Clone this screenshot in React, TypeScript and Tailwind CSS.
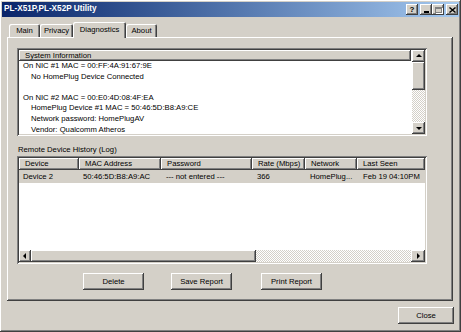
import React from "react";

/* -------------------- 3D borders -------------------- */

const raised =
  "shadow-[inset_-1px_-1px_#404040,inset_1px_1px_#ffffff,inset_-2px_-2px_#808080,inset_2px_2px_#d4d0c8]";
const sunken =
  "shadow-[inset_1px_1px_#808080,inset_-1px_-1px_#ffffff,inset_2px_2px_#404040,inset_-2px_-2px_#d4d0c8]";
const headerCell =
  "shadow-[inset_-1px_-1px_#404040,inset_1px_1px_#ffffff,inset_-2px_-2px_#808080]";
const checker =
  "bg-[repeating-conic-gradient(#ffffff_0_25%,#d4d0c8_0_50%)] bg-[length:2px_2px]";

type Dir = "up" | "down" | "left" | "right";

const arrowPoints: Record<Dir, string> = {
  up: "0,4 3,1 6,4",
  down: "0,2 3,5 6,2",
  left: "4,0 1,3 4,6",
  right: "2,0 5,3 2,6",
};

const ArrowBtn = ({ dir, w = 13, h = 12 }: { dir: Dir; w?: number; h?: number }) => (
  <div
    className={`shrink-0 bg-[#d4d0c8] ${raised} flex items-center justify-center`}
    style={{ width: w, height: h }}
  >
    <svg width="6" height="6" viewBox="0 0 6 6">
      <polygon points={arrowPoints[dir]} fill="#000" />
    </svg>
  </div>
);

const Button = ({ label, className = "" }: { label: string; className?: string }) => (
  <div
    className={`h-[17px] w-[61px] shrink-0 bg-[#d4d0c8] ${raised} flex items-center justify-center ${className}`}
  >
    {label}
  </div>
);

/* -------------------- Data -------------------- */

const sysInfo: { text: string; indent?: boolean }[] = [
  { text: "On NIC #1 MAC = 00:FF:4A:91:67:9E" },
  { text: "No HomePlug Device Connected", indent: true },
  { text: "" },
  { text: "On NIC #2 MAC = 00:E0:4D:08:4F:EA" },
  { text: "HomePlug Device #1 MAC = 50:46:5D:B8:A9:CE", indent: true },
  { text: "Network password: HomePlugAV", indent: true },
  { text: "Vendor: Qualcomm Atheros", indent: true },
];

const columns = [
  { title: "Device", w: 60, value: "Device 2", pad: 4 },
  { title: "MAC Address", w: 82, value: "50:46:5D:B8:A9:AC", pad: 4 },
  { title: "Password", w: 91, value: "--- not entered ---", pad: 5 },
  { title: "Rate (Mbps)", w: 53, value: "366", pad: 5 },
  { title: "Network", w: 52, value: "HomePlug...", pad: 5 },
  { title: "Last Seen", w: 68, value: "Feb 19 04:10PM", pad: 6 },
];

const tabs = [
  { label: "Main", w: 31 },
  { label: "Privacy", w: 33 },
  { label: "Diagnostics", w: 53, active: true },
  { label: "About", w: 31 },
];

/* -------------------- Component -------------------- */

const App: React.FC = () => {
  return (
    <div
      className={`w-[461px] h-[332px] bg-[#d4d0c8] p-[2px] flex flex-col text-[7.7px] leading-none text-black font-['Liberation_Sans',Arial,sans-serif] ${raised}`}
    >
      {/* Title bar */}
      <div className="h-[15px] shrink-0 flex items-center pl-[2px] pr-[1px] bg-gradient-to-r from-[#0a246a] to-[#a6caf0]">
        <span className="text-white font-bold text-[8.2px]">PL-X51P,PL-X52P Utility</span>
        <div className="ml-auto flex items-center">
          <div className={`w-[12px] h-[11px] bg-[#d4d0c8] ${raised} flex items-center justify-center font-bold text-[8px]`}>
            ?
          </div>
          <div className={`ml-[2px] w-[12px] h-[11px] bg-[#d4d0c8] ${raised} flex items-end justify-center pb-[2px]`}>
            <div className="w-[5px] h-[2px] bg-black" />
          </div>
          <div className={`w-[12px] h-[11px] bg-[#d4d0c8] ${raised} flex items-center justify-center`}>
            <div className="w-[7px] h-[6px] border border-[#808080] border-t-2 shadow-[1px_1px_#ffffff]" />
          </div>
          <div className={`ml-[2px] w-[12px] h-[11px] bg-[#d4d0c8] ${raised} flex items-center justify-center`}>
            <svg width="7" height="6" viewBox="0 0 7 6">
              <path d="M0.5 0.5 L6.5 5.5 M6.5 0.5 L0.5 5.5" stroke="#000" strokeWidth="1.4" />
            </svg>
          </div>
        </div>
      </div>

      {/* Tabs + panel */}
      <div className="pl-[5px] mt-[5px]">
        <div className="h-[15px] flex items-end pl-[2px]">
          {tabs.map((t) =>
            t.active ? (
              <div
                key={t.label}
                className="relative z-10 -mb-px h-[16px] bg-[#d4d0c8] rounded-t-[2px] shadow-[inset_1px_1px_#ffffff,inset_-1px_0_#404040,inset_-2px_0_#808080] flex items-start justify-center pt-[4px]"
                style={{ width: t.w }}
              >
                {t.label}
              </div>
            ) : (
              <div
                key={t.label}
                className="h-[13px] bg-[#d4d0c8] rounded-t-[2px] shadow-[inset_1px_1px_#ffffff,inset_-1px_0_#404040,inset_-2px_0_#808080] flex items-start justify-center pt-[3px]"
                style={{ width: t.w }}
              >
                {t.label}
              </div>
            )
          )}
        </div>

        <div className={`w-[446px] h-[264px] bg-[#d4d0c8] pt-[11px] pl-[10px] ${raised}`}>
          {/* System Information */}
          <div className={`w-[410px] h-[88px] bg-white p-[2px] flex overflow-hidden ${sunken}`}>
            <div className="flex-1 flex flex-col overflow-hidden">
              <div className={`h-[11px] shrink-0 bg-[#d4d0c8] ${headerCell} flex items-center pl-[6px]`}>
                System Information
              </div>
              <div className="pl-[4px] leading-[10.6px]">
                {sysInfo.map((l, i) => (
                  <div key={i} className={`h-[10.6px] whitespace-nowrap ${l.indent ? "pl-[8px]" : ""}`}>
                    {l.text}
                  </div>
                ))}
              </div>
            </div>
            <div className="w-[13px] shrink-0 flex flex-col ml-[1px]">
              <ArrowBtn dir="up" />
              <div className={`h-[28px] shrink-0 bg-[#d4d0c8] ${raised}`} />
              <div className={`flex-1 ${checker}`} />
              <ArrowBtn dir="down" />
            </div>
          </div>

          <div className="mt-[9px] h-[10px] leading-[10px] pl-[1px]">Remote Device History (Log)</div>

          {/* Log table */}
          <div className={`mt-[1px] w-[410px] h-[108px] bg-white p-[2px] flex flex-col ${sunken}`}>
            <div className="flex h-[12px] shrink-0">
              {columns.map((c) => (
                <div
                  key={c.title}
                  className={`shrink-0 h-full bg-[#d4d0c8] ${headerCell} flex items-center pl-[6px] whitespace-nowrap`}
                  style={{ width: c.w }}
                >
                  {c.title}
                </div>
              ))}
            </div>
            <div className="flex h-[13px] shrink-0 bg-[#d4d0c8]">
              {columns.map((c) => (
                <div
                  key={c.title}
                  className="shrink-0 h-full flex items-center whitespace-nowrap overflow-hidden"
                  style={{ width: c.w, paddingLeft: c.pad }}
                >
                  {c.value}
                </div>
              ))}
            </div>
            <div className="flex-1" />
            <div className="flex h-[12px] shrink-0">
              <ArrowBtn dir="left" w={12} />
              <div className={`w-[225px] h-full bg-[#d4d0c8] ${raised}`} />
              <div className={`flex-1 ${checker}`} />
              <ArrowBtn dir="right" w={14} />
            </div>
          </div>

          {/* Buttons */}
          <div className="mt-[9px] flex">
            <Button label="Delete" className="ml-[66px]" />
            <Button label="Save Report" className="ml-[27px]" />
            <Button label="Print Report" className="ml-[29px]" />
          </div>
        </div>
      </div>

      {/* Footer */}
      <div className="mt-[6px] flex justify-end pr-[5px]">
        <div className={`w-[56px] h-[17px] bg-[#d4d0c8] ${raised} flex items-center justify-center`}>Close</div>
      </div>
    </div>
  );
};

export default App;
